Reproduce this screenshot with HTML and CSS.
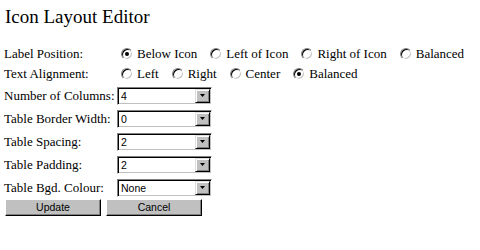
FILE: index.html
```html
<!DOCTYPE html>
<html>
<head>
<meta charset="utf-8">
<link rel="stylesheet" href="styles.css">
</head>
<body>
<h1 class="title">Icon Layout Editor</h1>
<div class="form">
  <div class="row radio-row">
    <span class="lbl">Label Position:</span>
    <div class="opts">
      <span class="opt"><span class="radio on"></span>Below Icon</span>
      <span class="opt"><span class="radio"></span>Left of Icon</span>
      <span class="opt"><span class="radio"></span>Right of Icon</span>
      <span class="opt"><span class="radio"></span>Balanced</span>
    </div>
  </div>
  <div class="row radio-row">
    <span class="lbl">Text Alignment:</span>
    <div class="opts">
      <span class="opt"><span class="radio"></span>Left</span>
      <span class="opt"><span class="radio"></span>Right</span>
      <span class="opt"><span class="radio"></span>Center</span>
      <span class="opt"><span class="radio on"></span>Balanced</span>
    </div>
  </div>
  <div class="row sel-row">
    <span class="lbl">Number of Columns:</span>
    <div class="select"><span class="val">4</span><span class="drop"><svg width="5" height="3" viewBox="0 0 5 3"><polygon points="0,0 5,0 2.5,3" fill="#000"/></svg></span></div>
  </div>
  <div class="row sel-row">
    <span class="lbl">Table Border Width:</span>
    <div class="select"><span class="val">0</span><span class="drop"><svg width="5" height="3" viewBox="0 0 5 3"><polygon points="0,0 5,0 2.5,3" fill="#000"/></svg></span></div>
  </div>
  <div class="row sel-row">
    <span class="lbl">Table Spacing:</span>
    <div class="select"><span class="val">2</span><span class="drop"><svg width="5" height="3" viewBox="0 0 5 3"><polygon points="0,0 5,0 2.5,3" fill="#000"/></svg></span></div>
  </div>
  <div class="row sel-row">
    <span class="lbl">Table Padding:</span>
    <div class="select"><span class="val">2</span><span class="drop"><svg width="5" height="3" viewBox="0 0 5 3"><polygon points="0,0 5,0 2.5,3" fill="#000"/></svg></span></div>
  </div>
  <div class="row sel-row">
    <span class="lbl">Table Bgd. Colour:</span>
    <div class="select"><span class="val">None</span><span class="drop"><svg width="5" height="3" viewBox="0 0 5 3"><polygon points="0,0 5,0 2.5,3" fill="#000"/></svg></span></div>
  </div>
  <div class="buttons">
    <span class="btn">Update</span>
    <span class="btn">Cancel</span>
  </div>
</div>
</body>
</html>
```
FILE: styles.css
```css
html, body {
  margin: 0;
  padding: 0;
  background: #fff;
  color: #000;
}
body {
  width: 480px;
  height: 250px;
  overflow: hidden;
  font-family: "Liberation Serif", "Times New Roman", serif;
}
.title {
  margin: 0;
  padding: 6px 0 0 5px;
  font-family: "Liberation Serif", "Times New Roman", serif;
  font-size: 19px;
  font-weight: normal;
  line-height: 22px;
  height: 38px;
}
.form {
  padding-left: 4px;
  font-size: 13px;
}
.row {
  display: flex;
  align-items: center;
}
.radio-row {
  height: 20px;
}
.sel-row {
  height: 23px;
}
.lbl {
  width: 113px;
  flex: none;
  white-space: nowrap;
}
.opts {
  display: flex;
  align-items: center;
  padding-left: 4px;
}
.opt {
  display: flex;
  align-items: center;
  margin-right: 13px;
  white-space: nowrap;
}
.radio {
  width: 10px;
  height: 10px;
  border-radius: 50%;
  border: 1px solid;
  border-color: #808080 #fff #fff #808080;
  box-shadow: inset 1px 1px 0 #000, inset -1px -1px 0 #c0c0c0;
  background: #fff;
  margin-right: 4px;
  position: relative;
  flex: none;
}
.radio.on::after {
  content: "";
  position: absolute;
  left: 3px;
  top: 3px;
  width: 4px;
  height: 4px;
  border-radius: 50%;
  background: #000;
}
.select {
  width: 91px;
  height: 14px;
  border: 1px solid;
  border-color: #808080 #fff #fff #808080;
  box-shadow: inset 1px 1px 0 #000, inset -1px -1px 0 #c0c0c0;
  padding: 1px;
  display: flex;
  align-items: stretch;
  background: #fff;
}
.val {
  flex: 1;
  font-family: "Liberation Sans", Arial, sans-serif;
  font-size: 10.5px;
  line-height: 14px;
  padding-left: 2px;
}
.drop {
  background: #c0c0c0;
  border: 1px solid;
  border-color: #dfdfdf #000 #000 #dfdfdf;
  box-shadow: inset 1px 1px 0 #fff, inset -1px -1px 0 #808080;
  display: flex;
  align-items: center;
  justify-content: center;
  box-sizing: border-box;
  width: 15px;
}
.drop svg {
  display: block;
}
.buttons {
  display: flex;
  gap: 5px;
  padding-left: 1px;
}
.btn {
  width: 96px;
  height: 17px;
  box-sizing: border-box;
  background: #c0c0c0;
  border: 1px solid;
  border-color: #fff #000 #000 #fff;
  box-shadow: inset -1px -1px 0 #808080;
  font-family: "Liberation Sans", Arial, sans-serif;
  font-size: 10.5px;
  line-height: 15px;
  text-align: center;
}
```
